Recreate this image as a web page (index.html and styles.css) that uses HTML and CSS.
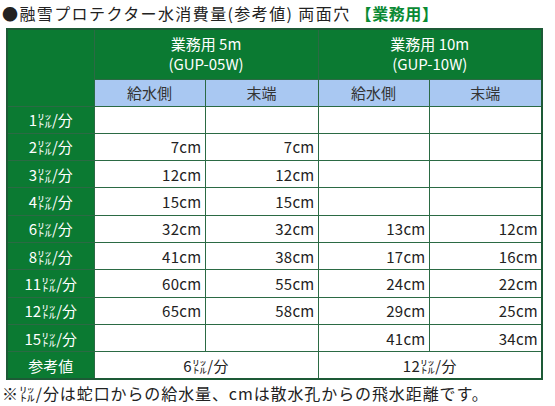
FILE: index.html
```html
<!DOCTYPE html>
<html lang="ja">
<head>
<meta charset="utf-8">
<link rel="stylesheet" href="styles.css">
</head>
<body>
<h1 class="title">●融雪プロテクター水消費量(参考値) 両面穴 <span class="biz">【業務用】</span></h1>
<table class="grid">
  <colgroup>
    <col class="c-label"><col class="c-a"><col class="c-b"><col class="c-a"><col class="c-b">
  </colgroup>
  <thead>
    <tr class="r-head">
      <th rowspan="2" class="corner"></th>
      <th colspan="2" class="group">業務用 5m<br>(GUP-05W)</th>
      <th colspan="2" class="group">業務用 10m<br>(GUP-10W)</th>
    </tr>
    <tr class="r-sub">
      <th class="sub">給水側</th><th class="sub">末端</th>
      <th class="sub">給水側</th><th class="sub">末端</th>
    </tr>
  </thead>
  <tbody>
    <tr><th class="lab">1㍑/分</th><td></td><td></td><td></td><td></td></tr>
    <tr><th class="lab">2㍑/分</th><td>7cm</td><td>7cm</td><td></td><td></td></tr>
    <tr><th class="lab">3㍑/分</th><td>12cm</td><td>12cm</td><td></td><td></td></tr>
    <tr><th class="lab">4㍑/分</th><td>15cm</td><td>15cm</td><td></td><td></td></tr>
    <tr><th class="lab">6㍑/分</th><td>32cm</td><td>32cm</td><td>13cm</td><td>12cm</td></tr>
    <tr><th class="lab">8㍑/分</th><td>41cm</td><td>38cm</td><td>17cm</td><td>16cm</td></tr>
    <tr><th class="lab">11㍑/分</th><td>60cm</td><td>55cm</td><td>24cm</td><td>22cm</td></tr>
    <tr><th class="lab">12㍑/分</th><td>65cm</td><td>58cm</td><td>29cm</td><td>25cm</td></tr>
    <tr><th class="lab">15㍑/分</th><td></td><td></td><td>41cm</td><td>34cm</td></tr>
    <tr><th class="lab">参考値</th><td colspan="2" class="ref">6㍑/分</td><td colspan="2" class="ref">12㍑/分</td></tr>
  </tbody>
</table>
<p class="note">※㍑/分は蛇口からの給水量、cmは散水孔からの飛水距離です。</p>
</body>
</html>
```
FILE: styles.css
```css
html, body {
  margin: 0;
  padding: 0;
  background: #ffffff;
}
body {
  font-family: "Noto Sans CJK JP", "DejaVu Sans", sans-serif;
  color: #222222;
  padding: 0 2px;
}
.title {
  margin: 2px 0 4px 0;
  font-size: 16px;
  font-weight: normal;
  line-height: 22px;
  color: #222222;
  white-space: nowrap;
  letter-spacing: 1.4px;
}
.biz {
  color: #0a8a34;
  font-weight: bold;
  letter-spacing: 0.6px;
}
.grid {
  margin-left: 4px;
  border-collapse: collapse;
  table-layout: fixed;
  width: 537px;
  border: 2px solid #1d5a36;
  font-size: 14px;
}
.c-label { width: 87px; }
.c-a { width: 111px; }
.c-b { width: 113px; }
.grid th, .grid td {
  border: 1px solid #2b6a44;
  padding: 0;
  font-weight: normal;
}
.r-head { height: 50px; }
.r-sub { height: 27px; }
.grid tbody tr { height: 27.3px; }
.corner, .group, .lab {
  background: #0b7a32;
  color: #ffffff;
}
.group {
  font-size: 15px;
  line-height: 20px;
  text-align: center;
}
.sub {
  background: #a9c8f2;
  color: #333333;
  font-size: 15px;
  text-align: center;
}
.lab {
  font-size: 15px;
  text-align: center;
}
.grid td {
  text-align: right;
  padding-right: 3px;
  font-size: 15px;
  letter-spacing: 0.3px;
}
.grid td.ref {
  text-align: center;
  padding-right: 0;
}
.note {
  margin: 3px 0 0 0;
  font-size: 16px;
  line-height: 20px;
  white-space: nowrap;
  letter-spacing: 0.9px;
}
```
